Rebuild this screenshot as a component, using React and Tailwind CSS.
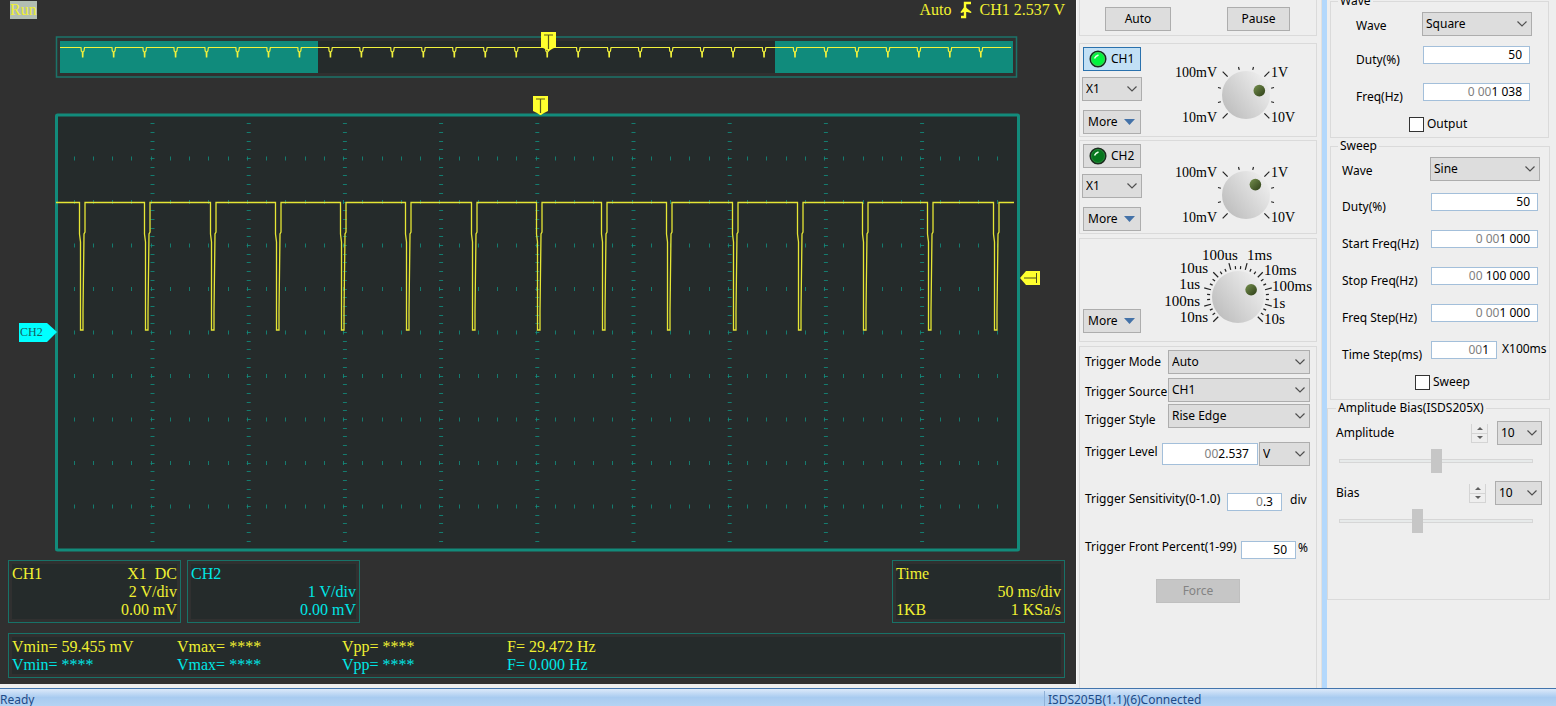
import { useState } from "react";

const OVERVIEW_PULSES = Array.from({ length: 30 }, (_, i) => 82.5 + i * 30.97);
const WAVE_PULSES = Array.from({ length: 15 }, (_, i) => 79 + Math.round(i * 65.25));

const pulsePath = (start, end, top, pulses, shape) =>
  `M${start} ${top}` +
  pulses.map((x) => shape.map(([dx, y]) => `L${x + dx} ${y}`).join("")).join("") +
  `L${end} ${top}`;

const TriggerFlag = ({ x, y }) => (
  <g transform={`translate(${x} ${y})`}>
    <path d="M0 0h15v15l-4 2-3 2h-1l-3-2-4-2z" fill="#ffff2e" />
    <path d="M3 3h9M7.5 3v14" stroke="#5b5b1c" strokeWidth="1.2" fill="none" />
  </g>
);

const Overview = () => (
  <svg viewBox="0 0 1076 52" className="block w-full h-auto">
    <rect x="56.5" y="9" width="960" height="40" fill="none" stroke="#1b7369" strokeWidth="1.5" />
    <rect x="60" y="13" width="953" height="32" fill="#252b2b" />
    <rect x="60" y="13" width="258" height="32" fill="#108b7c" />
    <rect x="775" y="13" width="238" height="32" fill="#108b7c" />
    <path
      d={pulsePath(60, 1011, 19.5, OVERVIEW_PULSES, [
        [-1.5, 19.5],
        [-1.2, 23],
        [-0.2, 24],
        [0, 29],
        [0.4, 29],
        [0.5, 24],
        [1.5, 23],
        [2, 19.5],
      ])}
      fill="none"
      stroke="#f2f23c"
      strokeWidth="1.2"
    />
    <TriggerFlag x={541} y={4} />
  </svg>
);

const Graticule = () => {
  const cols = Array.from({ length: 9 }, (_, i) => 152.5 + i * 96.2);
  const rows = Array.from({ length: 9 }, (_, i) => 66.5 + i * 43.5);
  const minor = Array.from({ length: 49 }, (_, i) => i + 1);

  return (
    <g stroke="#128b7c" strokeWidth="1">
      {cols.map((x) =>
        minor.map((k) => {
          const y = Math.round(22.5 + k * 8.7) + 0.5;
          return <path key={`${x}-${k}`} d={`M${x - 2} ${y}h4`} opacity="0.85" />;
        })
      )}
      {rows.map((y) =>
        minor.map((k) => {
          const x = Math.round(55.5 + k * 19.24) - 0.5;
          return <path key={`${y}-${k}`} d={`M${x} ${y - 2}v4`} opacity="0.85" />;
        })
      )}
    </g>
  );
};

const Plot = () => (
  <svg viewBox="0 0 1076 461" className="block w-full h-auto">
    <rect x="56.5" y="23" width="962" height="435" rx="1" fill="#252b2b" stroke="#128b7b" strokeWidth="3" />
    <Graticule />
    <path
      d={pulsePath(56, 1014, 110.5, WAVE_PULSES, [
        [0.5, 110.5],
        [0.5, 142],
        [1.5, 150],
        [1.5, 238],
        [4, 238],
        [4, 220],
        [5, 142],
        [6, 140],
        [6, 110.5],
      ])}
      fill="none"
      stroke="#e6e635"
      strokeWidth="1.3"
    />
    <TriggerFlag x={533} y={4} />
    <path d="M1020 186l6-7h14v14h-14z" fill="#ffff2e" />
    <path d="M1024 186h12M1036.500 181v10" stroke="#4d4d1e" fill="none" />
    <path d="M19 231h28l10 9-10 10h-28z" fill="#00ffff" />
    <text x="20" y="244" fontSize="12" fill="#17605f" className="font-['Liberation_Serif',serif]">
      CH2
    </text>
  </svg>
);

const ReadoutBox = ({ color, className, children }) => (
  <div className={`border border-[#187268] p-[3px] ${className}`}>
    <div className={`bg-[#252b2b] h-full pt-px ${color}`}>{children}</div>
  </div>
);

const MEASUREMENTS = [
  { color: "text-[#f0f032]", values: ["Vmin= 59.455 mV", "Vmax= ****", "Vpp= ****", "F= 29.472 Hz"] },
  { color: "text-[#00e6e6]", values: ["Vmin= ****", "Vmax= ****", "Vpp= ****", "F= 0.000 Hz"] },
];

const Scope = () => (
  <main className="flex-1 min-w-0 bg-[#303030] border-r border-[#f8f8f8] font-['Liberation_Serif',serif] text-base leading-[18px]">
    <header className="flex justify-between h-7 pt-px pl-[10px] pr-[11px] text-[#f0f032]">
      <span className="bg-[#b2beb2] h-[18px]">Run</span>
      <div className="flex gap-2">
        <span>Auto</span>
        <svg width="12" height="18" viewBox="0 0 12 18" className="fill-none stroke-[#ffff2e]">
          <path d="M1 16h4V2h6" strokeWidth="2.400" />
          <path d="M5 5l1.500 2 5 4-.5 1-4-1H4l-3 1-.5-1z" fill="#ffff2e" stroke="none" />
        </svg>
        <span>CH1 2.537 V</span>
      </div>
    </header>

    <Overview />
    <div className="mt-3">
      <Plot />
    </div>

    <div className="flex gap-[6px] mt-[7px] pl-2 pr-[11px]">
      <ReadoutBox color="text-[#f0f032]" className="w-[173px]">
        <div className="flex justify-between">
          <span>CH1</span>
          <span className="whitespace-pre">X1  DC</span>
        </div>
        <div className="text-right">2 V/div</div>
        <div className="text-right">0.00 mV</div>
      </ReadoutBox>
      <ReadoutBox color="text-[#00e6e6]" className="w-[173px]">
        <div>CH2</div>
        <div className="text-right">1 V/div</div>
        <div className="text-right">0.00 mV</div>
      </ReadoutBox>
      <ReadoutBox color="text-[#f0f032]" className="w-[173px] ml-auto">
        <div>Time</div>
        <div className="text-right">50 ms/div</div>
        <div className="flex justify-between">
          <span>1KB</span>
          <span>1 KSa/s</span>
        </div>
      </ReadoutBox>
    </div>

    <div className="mt-[10px] pl-2 pr-[11px]">
      <ReadoutBox color="" className="">
        {MEASUREMENTS.map((row) => (
          <div key={row.color} className={`flex ${row.color}`}>
            {row.values.map((value, i) => (
              <span key={i} className="w-[165px]">
                {value}
              </span>
            ))}
          </div>
        ))}
      </ReadoutBox>
    </div>
  </main>
);

const Button = ({ className, children, ...props }) => (
  <button className={`h-6 border border-[#adadad] bg-[#dddddd] ${className}`} {...props}>
    {children}
  </button>
);

const Select = ({ className, options, ...props }) => (
  <span className={`relative inline-block h-6 shrink-0 ${className}`}>
    <select
      className="appearance-none w-full h-full border border-[#adadad] bg-[#dddddd] pl-[3px] pr-4"
      {...props}
    >
      {options.map((option) => (
        <option key={option}>{option}</option>
      ))}
    </select>
    <svg
      viewBox="0 0 10 6"
      className="absolute right-[5px] top-[9px] w-[10px] h-[6px] pointer-events-none fill-none stroke-[#505050]"
    >
      <path d="M0.500 0.500L5 5l4.500-4.500" strokeWidth="1.200" />
    </svg>
  </span>
);

// Leading zeros stay grey, only the significant part is edited.
const NumberBox = ({ id, lead = "", value, className }) => {
  const [text, setText] = useState(value);

  return (
    <span
      className={`flex justify-end items-center shrink-0 border border-[#a3bfda] bg-white overflow-hidden whitespace-pre ${className}`}
    >
      <span className="text-[#808080]">{lead}</span>
      <input
        id={id}
        className="field-sizing-content bg-transparent text-black outline-none"
        value={text}
        onChange={(e) => setText(e.target.value)}
      />
    </span>
  );
};

const MoreButton = () => (
  <Button className="flex items-center justify-between w-[58px] pl-1 pr-[5px]">
    More
    <svg width="11" height="6" viewBox="0 0 11 6" fill="#4472a8">
      <path d="M0 0h11L5.500 6z" />
    </svg>
  </Button>
);

const Led = ({ on }) => (
  <svg width="18" height="18" viewBox="0 0 18 18">
    <circle cx="9" cy="9" r="7.800" fill={on ? "#00f53c" : "#05761c"} stroke="#1c2a1e" strokeWidth="1.500" />
    <circle cx="9" cy="9" r="6.500" fill="none" stroke={on ? "#4fbf63" : "#2f8741"} strokeWidth="0.800" />
    <path d="M5.500 8.500Q6.500 6 9.500 5" fill="none" stroke="#e9ffe9" strokeWidth="1.500" />
  </svg>
);

const Dial = ({ width, height, cx, cy, r, step, major, angle, dot, fontSize, labels }) => {
  const count = 270 / step + 1;
  const toXY = (deg, radius) => {
    const a = (deg * Math.PI) / 180;
    return [cx + Math.sin(a) * radius, cy - Math.cos(a) * radius];
  };
  const [dx, dy] = toXY(angle, dot);

  return (
    <svg width={width} height={height} viewBox={`0 0 ${width} ${height}`} className="shrink-0">
      <defs>
        <linearGradient id={`face${r}`} x1="0.1" y1="0.8" x2="0.9" y2="0.2">
          <stop offset="0" stopColor="#c0c0c0" />
          <stop offset="1" stopColor="#ececec" />
        </linearGradient>
        <linearGradient id={`dot${r}`} x1="0" y1="0" x2="1" y2="1">
          <stop offset="0" stopColor="#76904f" />
          <stop offset="1" stopColor="#2c3d16" />
        </linearGradient>
      </defs>
      <circle cx={cx} cy={cy} r={r} fill={`url(#face${r})`} />
      <circle cx={dx} cy={dy} r="5.800" fill={`url(#dot${r})`} />
      {Array.from({ length: count }, (_, i) => {
        const deg = -135 + i * step;
        const [x1, y1] = toXY(deg, r + 2);
        const [x2, y2] = toXY(deg, i % major === 0 ? r + 9 : r + 5);
        return <path key={i} d={`M${x1} ${y1}L${x2} ${y2}`} stroke="#222" strokeWidth="1.200" />;
      })}
      <g fontSize={fontSize} className="fill-black font-['Liberation_Serif',serif]">
        {labels.map(([text, x, y, anchor]) => (
          <text key={text} x={x} y={y} textAnchor={anchor}>
            {text}
          </text>
        ))}
      </g>
    </svg>
  );
};

const VOLT_LABELS = [
  ["100mV", 47, 17, "end"],
  ["10mV", 47, 62, "end"],
  ["1V", 101, 17, "start"],
  ["10V", 101, 62, "start"],
];

const TIME_LABELS = [
  ["100us", 42, 15, "start"],
  ["1ms", 87, 15, "start"],
  ["10us", 48, 28, "end"],
  ["10ms", 104, 30, "start"],
  ["1us", 40, 44, "end"],
  ["100ms", 112, 46, "start"],
  ["100ns", 40, 61, "end"],
  ["1s", 112, 63, "start"],
  ["10ns", 48, 77, "end"],
  ["10s", 104, 79, "start"],
];

const ChannelGroup = ({ name, on, angle, className, dialClass }) => (
  <section className={`flex border border-[#dadada] pl-[2px] pt-[3px] pb-px ${className}`}>
    <div className="flex flex-col h-[88px]">
      <button
        aria-pressed={on}
        className={`flex items-center gap-1 ml-px w-[58px] h-6 pl-[5px] border ${
          on ? "border-[#2a71ad] bg-[#c2e0f5]" : "border-[#adadad] bg-[#dddddd]"
        }`}
      >
        <Led on={on} />
        {name}
      </button>
      <Select className="w-[60px] mt-[6px]" options={["X1", "X10"]} aria-label={`${name} probe`} />
      <div className="ml-px mt-[9px]">
        <MoreButton />
      </div>
    </div>
    <div className={`ml-7 ${dialClass}`}>
      <Dial
        width={130}
        height={70}
        cx={76}
        cy={35}
        r={24}
        step={30}
        major={3}
        angle={angle}
        dot={14}
        fontSize={14}
        labels={VOLT_LABELS}
      />
    </div>
  </section>
);

const TriggerSelect = ({ id, label, options, className, labelClass = "" }) => (
  <div className={`flex items-center ${className}`}>
    <label htmlFor={id} className={`w-[83px] whitespace-nowrap ${labelClass}`}>
      {label}
    </label>
    <Select id={id} className="w-[142px]" options={options} />
  </div>
);

const Controls = () => (
  <aside className="w-[245px] shrink-0 flex flex-col pl-[2px] pr-1 border-r border-[#e0e0e0]">
    <section className="flex border border-t-0 border-[#dadada] h-9 pt-[7px] pl-[25px] gap-14">
      <Button className="w-[66px]">Auto</Button>
      <Button className="w-[63px]">Pause</Button>
    </section>
    <ChannelGroup name="CH1" on angle={72} className="mt-[7px]" dialClass="mt-[13px]" />
    <ChannelGroup name="CH2" on={false} angle={42} className="mt-[3px]" dialClass="mt-4" />

    <section className="flex items-end border border-[#dadada] mt-1 pl-[3px] pb-2 h-[104px]">
      <MoreButton />
      <div className="ml-[19px]">
        <Dial
          width={156}
          height={88}
          cx={78}
          cy={52}
          r={26}
          step={10}
          major={3}
          angle={61}
          dot={15}
          fontSize={15}
          labels={TIME_LABELS}
        />
      </div>
    </section>

    <section className="flex-1 border border-b-0 border-[#dadada] mt-1 pl-[5px] pt-[3px]">
      <TriggerSelect id="mode" label="Trigger Mode" options={["Auto", "Normal", "Single"]} />
      <TriggerSelect
        id="source"
        label="Trigger Source"
        options={["CH1", "CH2"]}
        className="mt-1"
        labelClass="pt-1"
      />
      <TriggerSelect
        id="style"
        label="Trigger Style"
        options={["Rise Edge", "Fall Edge"]}
        className="mt-[2px]"
        labelClass="pt-2"
      />

      <div className="flex items-center mt-[14px]">
        <label htmlFor="level" className="w-[77px] pb-1">
          Trigger Level
        </label>
        <NumberBox id="level" lead="00" value="2.537" className="w-24 h-[22px] pr-2" />
        <Select className="w-[51px] ml-px" options={["V", "mV"]} aria-label="Level unit" />
      </div>
      <div className="flex items-center mt-[25px]">
        <label htmlFor="sensitivity" className="w-[142px] pb-[6px] whitespace-nowrap">
          Trigger Sensitivity(0-1.0)
        </label>
        <NumberBox id="sensitivity" lead="0" value=".3" className="w-[55px] h-[18px] pr-2" />
        <span className="ml-2 pb-1">div</span>
      </div>
      <div className="flex items-center mt-[26px]">
        <label htmlFor="percent" className="w-[156px] pb-[6px] whitespace-nowrap">
          Trigger Front Percent(1-99)
        </label>
        <NumberBox id="percent" value="50" className="w-[55px] h-[18px] pr-2" />
        <span className="ml-[2px] pb-1">%</span>
      </div>
      <button
        disabled
        className="block mt-[18px] ml-[71px] w-[84px] h-6 border border-[#bfbfbf] bg-[#c6c6c6] text-[#838383]"
      >
        Force
      </button>
    </section>
  </aside>
);

const Field = ({ id, label, lead, value, className, labelWidth = "w-[89px]", width = "w-[107px]", suffix }) => (
  <div className={`flex items-start ${className}`}>
    <label htmlFor={id} className={`pt-[6px] whitespace-nowrap ${labelWidth}`}>
      {label}
    </label>
    <NumberBox id={id} lead={lead} value={value} className={`${width} h-[18px] pr-[7px]`} />
    {suffix && <span className="ml-[5px] whitespace-nowrap">{suffix}</span>}
  </div>
);

const CheckBox = ({ label, className }) => (
  <label className={`flex items-center gap-[3px] ${className}`}>
    <input type="checkbox" className="appearance-none size-[15px] border border-[#333333] bg-white" />
    {label}
  </label>
);

const Spinner = ({ label }) => (
  <span className="flex flex-col w-[17px] border border-t-0 border-[#d4d4d4]">
    <button aria-label={`${label} up`} className="flex items-center justify-center h-[9px]">
      <svg width="6" height="3" viewBox="0 0 6 3" fill="#606060">
        <path d="M3 0l3 3H0z" />
      </svg>
    </button>
    <button
      aria-label={`${label} down`}
      className="flex items-center justify-center h-[9px] border-t border-[#d4d4d4]"
    >
      <svg width="6" height="3" viewBox="0 0 6 3" fill="#606060">
        <path d="M0 0h6L3 3z" />
      </svg>
    </button>
  </span>
);

const LevelSlider = ({ label, initial, width, className }) => {
  const [level, setLevel] = useState(initial);

  return (
    <div className={className}>
      <div className="flex items-center gap-[9px]">
        <span className="mr-auto">{label}</span>
        <Spinner label={label} />
        <Select className={width} options={["10", "1"]} aria-label={`${label} step`} />
      </div>
      <input
        type="range"
        aria-label={label}
        value={level}
        onChange={(e) => setLevel(Number(e.target.value))}
        className="block appearance-none w-[194px] h-6 mt-[4px] ml-[3px] bg-transparent [&::-webkit-slider-runnable-track]:h-1 [&::-webkit-slider-runnable-track]:border [&::-webkit-slider-runnable-track]:border-[#d6d6d6] [&::-webkit-slider-runnable-track]:bg-[#e7eaea] [&::-webkit-slider-thumb]:appearance-none [&::-webkit-slider-thumb]:w-[11px] [&::-webkit-slider-thumb]:h-6 [&::-webkit-slider-thumb]:-mt-[11px] [&::-webkit-slider-thumb]:bg-[#c6c6c6]"
      />
    </div>
  );
};

const Generator = () => (
  <aside className="w-[229px] shrink-0 border-l-[5px] border-[#b3d8fc] box-content overflow-hidden">
    <fieldset className="-mt-[7px] ml-[3px] w-[219px] h-[145px] border border-[#dadada] pl-[25px]">
      <legend className="-ml-[18px] px-[2px]">Wave</legend>
      <div className="flex items-center mt-[3px]">
        <label htmlFor="wave" className="w-[66px] pt-1">
          Wave
        </label>
        <Select id="wave" className="w-[110px]" options={["Square", "Sine", "Triangle"]} />
      </div>
      <Field id="duty" label="Duty(%)" value="50" labelWidth="w-[67px]" className="mt-[10px]" />
      <Field id="freq" label="Freq(Hz)" lead="0 00" value="1 038" labelWidth="w-[67px]" className="mt-[15px]" />
      <CheckBox label="Output" className="mt-[11px] ml-[53px]" />
    </fieldset>

    <fieldset className="ml-[3px] w-[220px] h-[262px] border border-[#dadada] pl-[11px]">
      <legend className="-ml-1 px-[2px]">Sweep</legend>
      <div className="flex items-center mt-[3px]">
        <label htmlFor="sweep-wave" className="w-[88px] pt-1">
          Wave
        </label>
        <Select id="sweep-wave" className="w-[110px]" options={["Sine", "Square"]} />
      </div>
      <Field id="sweep-duty" label="Duty(%)" value="50" className="mt-3" />
      <Field id="start" label="Start Freq(Hz)" lead="0 00" value="1 000" className="mt-[15px]" />
      <Field id="stop" label="Stop Freq(Hz)" lead="00 " value="100 000" className="mt-[15px]" />
      <Field id="freq-step" label="Freq Step(Hz)" lead="0 00" value="1 000" className="mt-[15px]" />
      <Field
        id="time-step"
        label="Time Step(ms)"
        lead="00"
        value="1"
        width="w-[66px]"
        suffix="X100ms"
        className="mt-[15px]"
      />
      <CheckBox label="Sweep" className="mt-[11px] ml-[73px]" />
    </fieldset>

    <fieldset className="w-[223px] h-[200px] border border-[#dadada] pl-2 pr-[7px]">
      <legend className="px-[2px]">Amplitude Bias(ISDS205X)</legend>
      <LevelSlider label="Amplitude" initial={50} width="w-[45px]" className="mt-[5px]" />
      <LevelSlider label="Bias" initial={40} width="w-[47px]" className="mt-2" />
    </fieldset>
  </aside>
);

const StatusBar = () => (
  <footer className="flex h-[18px] overflow-hidden border-t border-[#4274ac] bg-linear-to-b from-[#dce9f9] via-[#a8cbf0] to-[#b4d3f3] text-[#1d4a87] pt-[2px] leading-[18px]">
    <span className="flex-1">Ready</span>
    <span className="w-[512px] border-l border-[#8fb1d8] pl-[3px]">ISDS205B(1.1)(6)Connected</span>
  </footer>
);

export default function App() {
  return (
    <div className="flex flex-col min-h-screen bg-[#eeeeee] text-black text-xs font-['Noto_Sans',sans-serif]">
      <div className="flex flex-1">
        <div className="flex flex-1 min-w-0 pb-1">
          <Scope />
        </div>
        <Controls />
        <Generator />
      </div>
      <StatusBar />
    </div>
  );
}
